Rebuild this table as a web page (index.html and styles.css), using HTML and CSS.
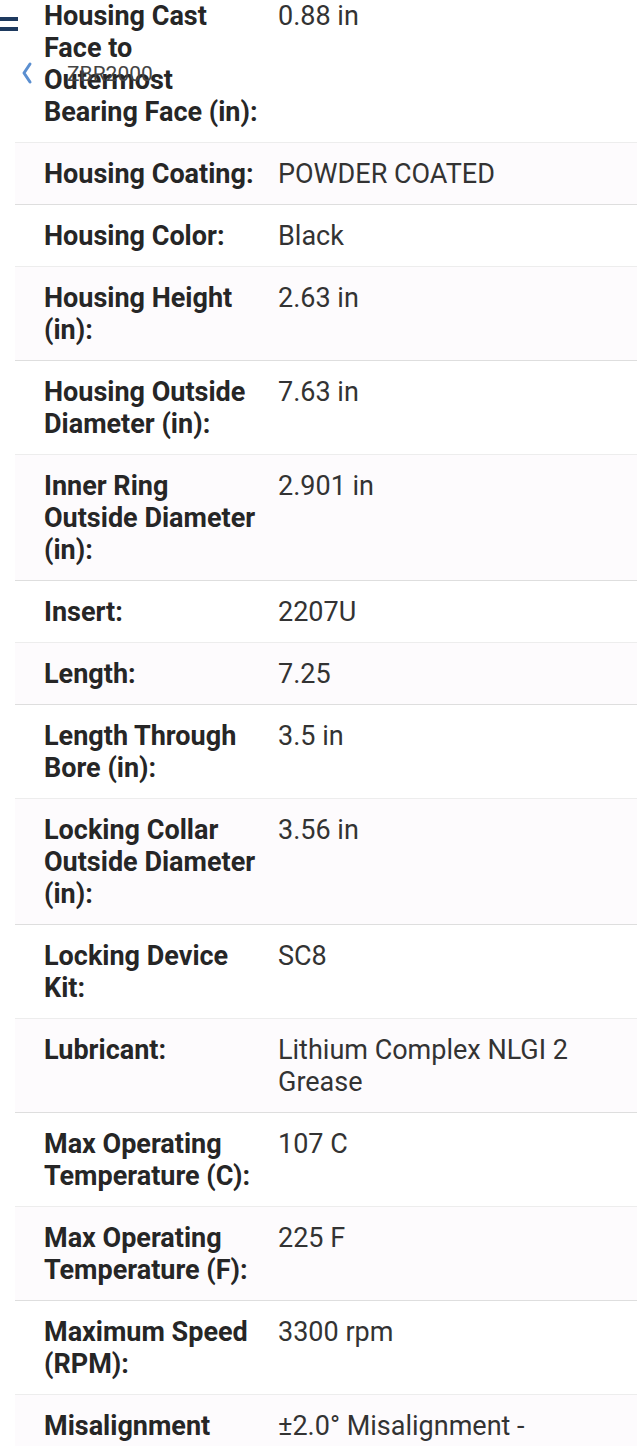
FILE: index.html
```html
<!DOCTYPE html>
<html lang="en">
<head>
  <meta charset="UTF-8" />
  <title>ZBR2000 Specifications</title>
  <link rel="stylesheet" href="styles.css">
</head>
<body>
  <div class="topbar">
    <span class="menu"><i></i><i></i></span>
    <svg class="back" width="12" height="24" viewBox="0 0 12 24">
      <polyline points="9,3 3,12 9,21" fill="none" stroke="#5b8fd0" stroke-width="3" stroke-linecap="round" stroke-linejoin="round" />
    </svg>
    <span class="crumb">ZBR2000</span>
  </div>

  <div class="specs">
    <div class="row">
      <div class="label">Housing Cast Face to Outermost Bearing Face (in):</div>
      <div class="value">0.88 in</div>
    </div>
    <div class="row alt">
      <div class="label">Housing Coating:</div>
      <div class="value">POWDER COATED</div>
    </div>
    <div class="row">
      <div class="label">Housing Color:</div>
      <div class="value">Black</div>
    </div>
    <div class="row alt">
      <div class="label">Housing Height (in):</div>
      <div class="value">2.63 in</div>
    </div>
    <div class="row">
      <div class="label">Housing Outside Diameter (in):</div>
      <div class="value">7.63 in</div>
    </div>
    <div class="row alt">
      <div class="label">Inner Ring Outside Diameter (in):</div>
      <div class="value">2.901 in</div>
    </div>
    <div class="row">
      <div class="label">Insert:</div>
      <div class="value">2207U</div>
    </div>
    <div class="row alt">
      <div class="label">Length:</div>
      <div class="value">7.25</div>
    </div>
    <div class="row">
      <div class="label">Length Through Bore (in):</div>
      <div class="value">3.5 in</div>
    </div>
    <div class="row alt">
      <div class="label">Locking Collar Outside Diameter (in):</div>
      <div class="value">3.56 in</div>
    </div>
    <div class="row">
      <div class="label">Locking Device Kit:</div>
      <div class="value">SC8</div>
    </div>
    <div class="row alt">
      <div class="label">Lubricant:</div>
      <div class="value">Lithium Complex NLGI 2 Grease</div>
    </div>
    <div class="row">
      <div class="label">Max Operating Temperature (C):</div>
      <div class="value">107 C</div>
    </div>
    <div class="row alt">
      <div class="label">Max Operating Temperature (F):</div>
      <div class="value">225 F</div>
    </div>
    <div class="row">
      <div class="label">Maximum Speed (RPM):</div>
      <div class="value">3300 rpm</div>
    </div>
    <div class="row alt">
      <div class="label">Misalignment</div>
      <div class="value">&plusmn;2.0&deg; Misalignment - Standard Seal</div>
    </div>
  </div>
</body>
</html>
```

FILE: styles.css
```css
body {
  margin: 0;
  background: #fff;
  font-family: Roboto, 'Liberation Sans', sans-serif;
  color: #2b2b2b;
  overflow: hidden;
}
.topbar {
  position: absolute;
  top: 0;
  left: 0;
  width: 200px;
  height: 100px;
  z-index: 2;
}
.menu {
  position: absolute;
  top: 17px;
  left: 0;
  width: 18px;
}
.menu i {
  display: block;
  height: 4px;
  background: #1e3a5f;
  margin-bottom: 6px;
}
.back {
  position: absolute;
  top: 61px;
  left: 21px;
}
.crumb {
  position: absolute;
  top: 62px;
  left: 67px;
  font-size: 21px;
  color: #444;
}
.specs {
  margin: -15px 4px 0 15px;
}
.row {
  display: flex;
  gap: 20px;
  padding: 15px 20px 14px 29px;
  font-size: 27px;
  line-height: 32px;
  border-bottom: 1px solid #ededed;
  background: #fff;
}
.row.alt {
  background: #fdfbfd;
  border-bottom-color: #dedede;
}
.label {
  flex: 0 0 214px;
  font-weight: bold;
  color: #262626;
}
.value {
  flex: 0 1 330px;
  color: #333;
}
```
